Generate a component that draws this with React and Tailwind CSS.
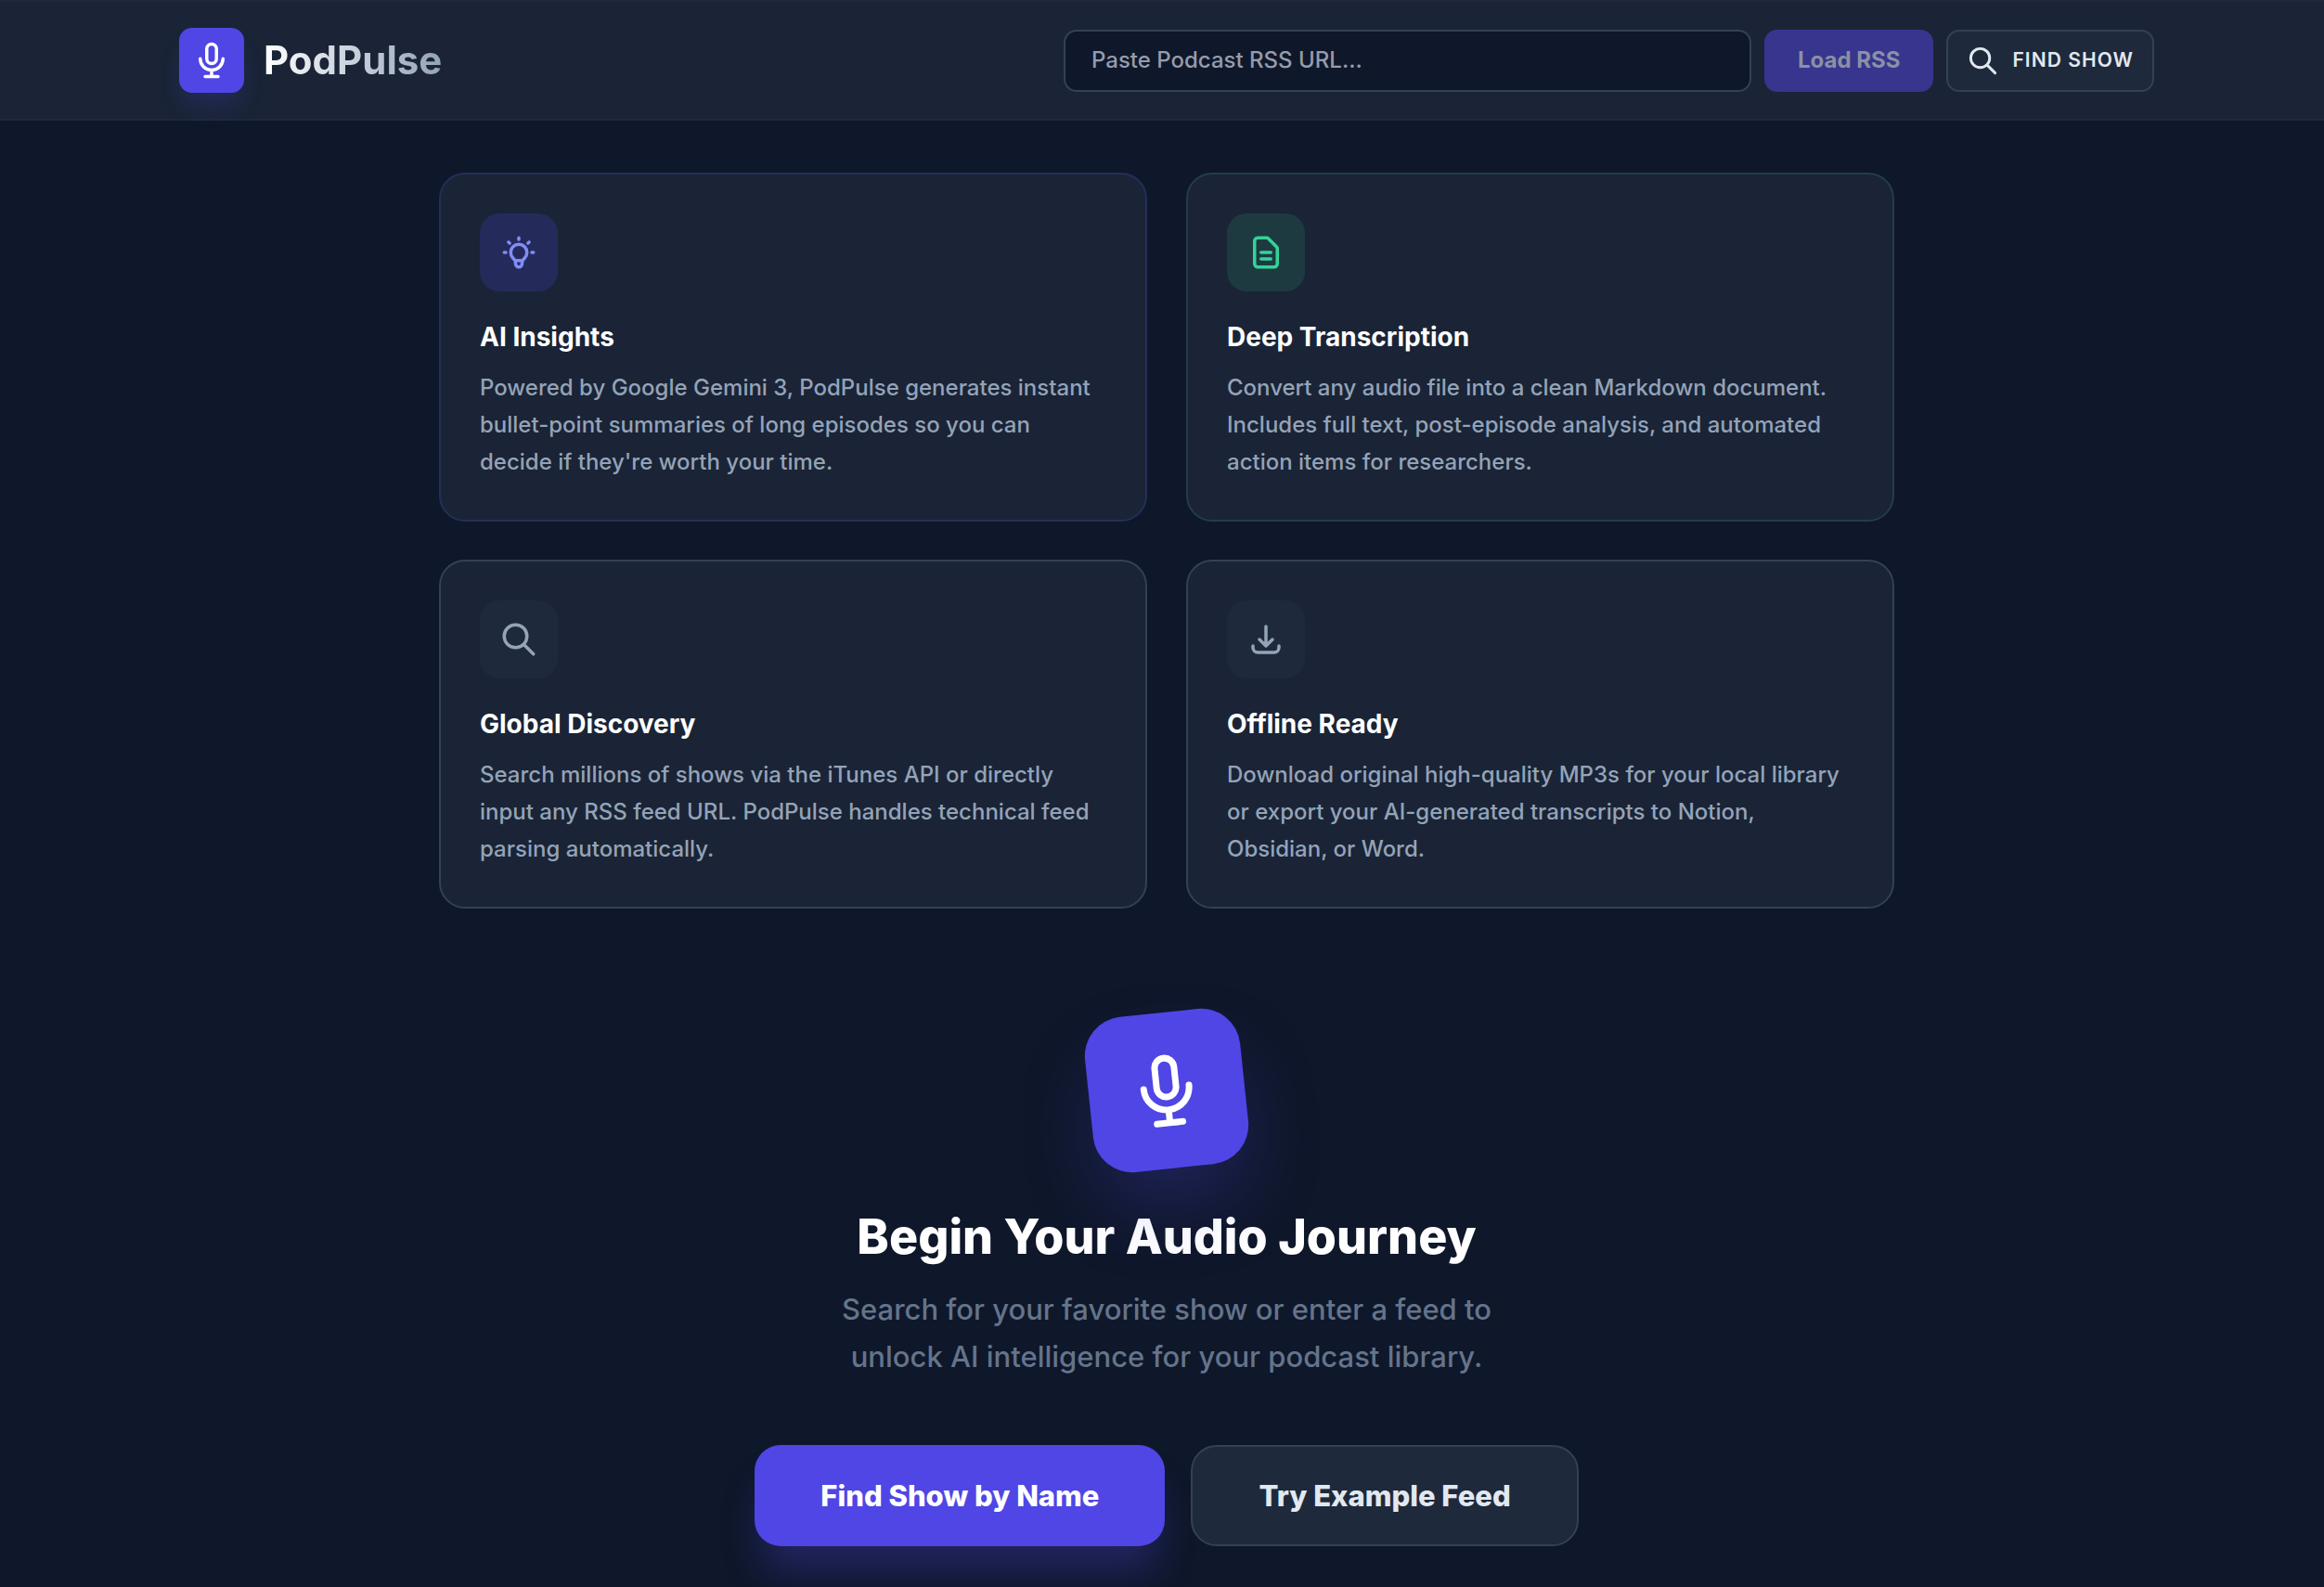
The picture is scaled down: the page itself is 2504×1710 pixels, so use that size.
const ICONS = {
  mic: 'M19 11a7 7 0 01-7 7m0 0a7 7 0 01-7-7m7 7v4m0 0H8m4 0h4m-4-8a3 3 0 01-3-3V5a3 3 0 116 0v6a3 3 0 01-3 3z',
  search: 'M21 21l-6-6m2-5a7 7 0 11-14 0 7 7 0 0114 0z',
  bulb: 'M9.663 17h4.673M12 3v1m6.364 1.636l-.707.707M21 12h-1M4 12H3m3.343-5.657l-.707-.707m2.828 9.9a5 5 0 117.072 0l-.548.547A3.374 3.374 0 0014 18.469V19a2 2 0 11-4 0v-.531c0-.895-.356-1.754-.988-2.386l-.548-.547z',
  document: 'M9 12h6m-6 4h6m2 5H7a2 2 0 01-2-2V5a2 2 0 012-2h5.586a1 1 0 01.707.293l5.414 5.414a1 1 0 01.293.707V19a2 2 0 01-2 2z',
  download: 'M4 16v1a3 3 0 003 3h10a3 3 0 003-3v-1m-4-4l-4 4m0 0l-4-4m4 4V4',
};

const Icon = ({ name, className }) => (
  <svg className={className} fill="none" stroke="currentColor" viewBox="0 0 24 24" aria-hidden="true">
    <path strokeLinecap="round" strokeLinejoin="round" strokeWidth={2} d={ICONS[name]} />
  </svg>
);

const features = [
  {
    icon: 'bulb',
    title: 'AI Insights',
    text: "Powered by Google Gemini 3, PodPulse generates instant bullet-point summaries of long episodes so you can decide if they're worth your time.",
    border: 'border-[#252f57]',
    badge: 'bg-[#242b5a] text-[#818cf8]',
  },
  {
    icon: 'document',
    title: 'Deep Transcription',
    text: 'Convert any audio file into a clean Markdown document. Includes full text, post-episode analysis, and automated action items for researchers.',
    border: 'border-[#213e48]',
    badge: 'bg-[#1e3a41] text-[#34d399]',
  },
  {
    icon: 'search',
    title: 'Global Discovery',
    text: 'Search millions of shows via the iTunes API or directly input any RSS feed URL. PodPulse handles technical feed parsing automatically.',
    border: 'border-[#334155]',
    badge: 'bg-[#1e293b] text-[#94a3b8]',
  },
  {
    icon: 'download',
    title: 'Offline Ready',
    text: 'Download original high-quality MP3s for your local library or export your AI-generated transcripts to Notion, Obsidian, or Word.',
    border: 'border-[#334155]',
    badge: 'bg-[#1e293b] text-[#94a3b8]',
  },
];

const FeatureCard = ({ icon, title, text, border, badge }) => (
  <div className={`rounded-[28px] border-2 bg-[#1a2436] p-[42px] ${border}`}>
    <div className={`mb-7 flex size-[84px] items-center justify-center rounded-[21px] ${badge}`}>
      <Icon name={icon} className="size-[42px]" />
    </div>
    <h3 className="mb-3.5 text-[28px] leading-[42px] font-bold text-white">{title}</h3>
    <p className="text-[24px] leading-[40px] font-medium text-[#94a3b8]">{text}</p>
  </div>
);

const Header = () => (
  <header className="border-y-2 border-[#1f293b] bg-[#1a2436] pl-2.5">
    <div className="mx-auto flex max-w-[2240px] items-center justify-between px-14 py-7">
      <div className="flex items-center gap-[21px]">
        <div className="flex size-[70px] items-center justify-center rounded-[14px] bg-[#4f46e5] text-white shadow-[0_18px_26px_-5px_rgba(79,70,229,0.2)]">
          <Icon name="mic" className="size-[42px]" />
        </div>
        <h1 className="bg-linear-to-r from-white to-[#94a3b8] bg-clip-text text-[42px] leading-[56px] font-bold text-transparent">
          PodPulse
        </h1>
      </div>
      <form className="flex h-[67px] w-[1175px] gap-3.5" onSubmit={(e) => e.preventDefault()}>
        <input
          type="url"
          aria-label="Podcast RSS URL"
          placeholder="Paste Podcast RSS URL..."
          className="min-w-0 flex-1 rounded-[14px] border-2 border-[#334155] bg-[#0f172a] px-7 text-[24px] font-medium text-slate-100 placeholder:text-[#959cab]"
        />
        <button
          type="submit"
          disabled
          className="rounded-[14px] bg-[#37358e] px-9 text-[24px] font-bold text-[#8b90a4]"
        >
          Load RSS
        </button>
        <button
          type="button"
          className="flex items-center gap-3.5 rounded-[14px] border-2 border-[#334155] bg-[#1e293b] px-5 text-[21px] font-semibold tracking-wider text-[#e2e8f0]"
        >
          <Icon name="search" className="size-[35px]" />
          FIND SHOW
        </button>
      </form>
    </div>
  </header>
);

const Hero = () => (
  <section className="mt-28 flex flex-col items-center text-center">
    <div className="mb-[42px] flex size-[168px] -rotate-6 items-center justify-center rounded-[42px] bg-[#4f46e5] text-white shadow-[0_44px_88px_-14px_rgba(79,70,229,0.3)]">
      <Icon name="mic" className="size-[84px]" />
    </div>
    <h2 className="mb-[21px] text-[52px] leading-[63px] font-extrabold text-white">Begin Your Audio Journey</h2>
    <p className="mb-[70px] max-w-[784px] text-[31px] leading-[51px] font-medium text-[#64748b]">
      Search for your favorite show or enter a feed to unlock AI intelligence for your podcast library.
    </p>
    <div className="flex gap-7 text-[31px] leading-[49px] font-extrabold">
      <button
        type="button"
        className="rounded-[28px] bg-[#4f46e5] px-[71px] text-white shadow-[0_35px_44px_-9px_rgba(79,70,229,0.3)]"
      >
        Find Show by Name
      </button>
      <button
        type="button"
        className="rounded-[28px] border-2 border-[#334155] bg-[#1e293b] px-[71px] py-7 text-[#e2e8f0]"
      >
        Try Example Feed
      </button>
    </div>
  </section>
);

const App = () => (
  <div className="min-h-screen bg-[#0f172a] font-['Inter',sans-serif]">
    <Header />
    <main className="pt-14 pb-11 pl-2.5">
      <div className="mx-auto grid max-w-[1568px] grid-cols-2 gap-x-[42px] gap-y-[41px]">
        {features.map((feature) => (
          <FeatureCard key={feature.title} {...feature} />
        ))}
      </div>
      <Hero />
    </main>
  </div>
);

export default App;
